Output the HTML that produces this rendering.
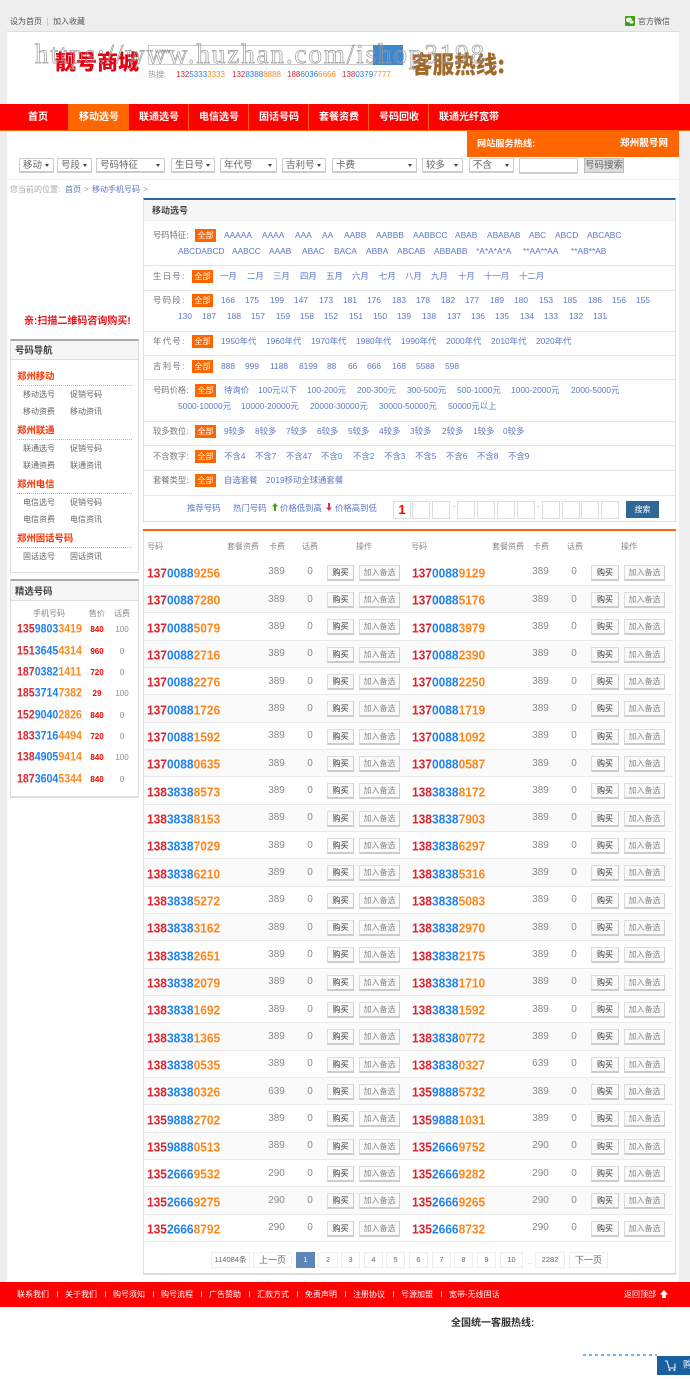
<!DOCTYPE html>
<html lang="zh"><head><meta charset="utf-8"><title>靓号商城</title>
<style>
*{margin:0;padding:0;box-sizing:border-box}
html,body{width:690px;height:1379px;overflow:hidden;background:#fff}
body{font-family:"Liberation Sans","Noto Sans CJK SC",sans-serif}
#p{position:relative;width:690px;height:1379px;overflow:hidden;filter:blur(.35px)}
.b{position:absolute}
.t,.t *{font-style:normal;text-decoration:none}
.t{position:absolute;white-space:nowrap;line-height:1;transform:translateY(-50%);font-size:8px;color:#666}
.fr{position:absolute;left:0;width:0;height:0}
.fr a{position:absolute;top:0;white-space:nowrap;line-height:1;transform:translateY(-50%);font-size:8.4px;color:#5b78c6}
.fr .lb{color:#777;font-size:8.3px}
.all{position:absolute;width:21px;height:13px;top:-6.5px;background:#f60;color:#fff;font-size:8px;line-height:13px;text-align:center}
.sel{position:absolute;top:158px;height:15px;border:1px solid #ccc;border-bottom:2px solid #ccc;background:#fff;font-size:9.5px;line-height:13px;color:#666;padding-left:3px;white-space:nowrap}
.sel:after{content:"";position:absolute;right:4px;top:5px;border:2px solid transparent;border-top:3px solid #444}
.nav{position:absolute;top:112px;font-size:10px;font-weight:700;color:#fff;line-height:12px;white-space:nowrap}
.sp{position:absolute;top:104px;width:1px;height:27px;background:#f60}
.sd{position:absolute;left:144px;width:531px;height:1px;background:#e6e6e6}
.i{position:absolute;font-size:8px;color:#666;line-height:1;white-space:nowrap;transform:translateY(-50%)}
.h{position:absolute;font-size:10.5px;font-weight:700;color:#f30;line-height:1;white-space:nowrap;transform:translateY(-50%) scaleX(.8);transform-origin:left}
.d{position:absolute;left:17px;width:115px;border-top:1px dotted #bbb}
.sn{position:absolute;left:17px;font-size:11.5px;font-weight:700;line-height:1;white-space:nowrap;transform:translateY(-50%) scaleX(.923);transform-origin:left}
.sn i{font-style:normal;color:#e0262e}.sn u{text-decoration:none;color:#1e82f0}.sn s{text-decoration:none;color:#ff8a1e}
.spr{position:absolute;left:85px;width:24px;text-align:center;font-size:8px;font-weight:700;color:#f00;line-height:1;transform:translateY(-50%)}
.sfe{position:absolute;left:110px;width:24px;text-align:center;font-size:8px;color:#888;line-height:1;transform:translateY(-50%)}
.th{position:absolute;top:547px;font-size:8px;color:#888;line-height:1;transform:translateY(-50%);white-space:nowrap}
#rows{position:absolute;left:144px;top:558.7px;width:529px}
.r{position:relative;height:27.33px;background:linear-gradient(#e9e9e9,#e9e9e9) 0 100%/100% 1px no-repeat}
.r.e{background:linear-gradient(#e9e9e9,#e9e9e9) 0 100%/100% 1px no-repeat,#fafafa}
.r b{position:absolute;top:14.3px;font-size:13px;font-weight:700;line-height:1;white-space:nowrap;transform:translateY(-50%) scaleX(.92);transform-origin:left}
.r b i{font-style:normal;color:#e0202a}.r b u{text-decoration:none;color:#1e82f5}.r b s{text-decoration:none;color:#ff861a}
.n1{left:3px}.n2{left:267.5px}
.r em{position:absolute;top:13.6px;font-style:normal;font-size:10px;color:#888;line-height:1;transform:translateY(-50%);text-align:center;width:24px}
.f1{left:120.5px}.z1{left:154px}.f2{left:384.5px}.z2{left:418px}
.r a{position:absolute;top:6px;height:16px;border:1px solid #ddd;border-bottom:2px solid #ccc;border-right-color:#ccc;font-size:8px;line-height:14px;text-align:center;background:#fafafa}
.y1{left:183px;width:27px;color:#333}.y2{left:447px;width:28px;color:#333}
.k1{left:215px;width:41px;color:#888}.k2{left:480px;width:41px;color:#888}
.pg{position:absolute;top:1252px;height:16px;border:1px solid #eee;font-size:7.5px;line-height:14px;text-align:center;color:#666;background:#fff}
.nb{position:absolute;top:501px;width:18px;height:18px;border:1px solid #ddd;background:#fff}
.ft{position:absolute;top:1295px;font-size:8px;color:#fff;line-height:1;transform:translateY(-50%);white-space:nowrap}
.fs{position:absolute;top:1291px;width:1px;height:6px;background:#fbb}
</style></head><body><div id="p">
<div class="b" style="left:0;top:0;width:690px;height:1282px;background:#eee"></div>
<div class="b" style="left:7px;top:31px;width:672px;height:1251px;background:#fff;border-top:1px solid #ddd"></div>
<span class="t" style="left:10px;top:22px;color:#555">设为首页</span>
<div class="b" style="left:47px;top:18px;width:1px;height:8px;background:#ccc"></div>
<span class="t" style="left:53px;top:22px;color:#555">加入收藏</span>
<div class="b" style="left:625px;top:16px;width:10px;height:10px;background:#3aa510;border-radius:1px"></div>
<svg class="b" style="left:625px;top:16px" width="10" height="10"><ellipse cx="4" cy="4" rx="3" ry="2.4" fill="#fff"/><ellipse cx="6.5" cy="6" rx="2.3" ry="1.9" fill="#fff" stroke="#3aa510" stroke-width=".5"/></svg>
<span class="t" style="left:638px;top:22px;color:#555">官方微信</span>

<div class="b" style="left:148px;top:45px;width:255px;height:20px;border:1px solid #ccc;background:#fff"></div>
<div class="b" style="left:373px;top:45px;width:30px;height:20px;background:#3d88cf"></div>
<span class="t" style="left:155px;top:52px;font-size:7px;color:#888">www</span>
<span class="t" style="left:55px;top:62px;font-size:21px;font-weight:900;color:#e60012;font-family:'Noto Sans CJK SC',sans-serif;letter-spacing:0">靓号商城</span>
<span class="t" style="left:411px;top:63px;font-size:24px;font-weight:900;color:#a06a2c;font-family:'Noto Sans CJK SC',sans-serif;transform:translateY(-50%) scaleX(.9);transform-origin:left">客服热线:</span>
<svg class="b" style="left:0;top:35px" width="520" height="40"><text x="35" y="28" textLength="449" lengthAdjust="spacing" font-family="Liberation Serif" font-size="27" fill="none" stroke="#999" stroke-width=".7">https://www.huzhan.com/ishop3198</text></svg>
<span class="t" style="left:148px;top:75px;color:#999">热搜:</span>
<span class="t" style="left:176px;top:75px;font-size:8px;color:#ff8a1e"><span style="color:#e0262e">132</span><span style="color:#1e82f0">5333</span>3333</span>
<span class="t" style="left:232px;top:75px;font-size:8px;color:#ff8a1e"><span style="color:#e0262e">132</span><span style="color:#1e82f0">8388</span>8888</span>
<span class="t" style="left:287px;top:75px;font-size:8px;color:#ff8a1e"><span style="color:#e0262e">188</span><span style="color:#1e82f0">6036</span>6666</span>
<span class="t" style="left:342px;top:75px;font-size:8px;color:#ff8a1e"><span style="color:#e0262e">138</span><span style="color:#1e82f0">0379</span>7777</span>

<div class="b" style="left:0;top:104px;width:690px;height:27px;background:#f00;border-bottom:1px solid #f60"></div>
<div class="b" style="left:68px;top:104px;width:60px;height:27px;background:#f60"></div>
<div class="sp" style="left:128px"></div><div class="sp" style="left:188px"></div><div class="sp" style="left:248px"></div><div class="sp" style="left:308px"></div><div class="sp" style="left:368px"></div><div class="sp" style="left:428px"></div>
<span class="nav" style="left:28px">首页</span><span class="nav" style="left:79px">移动选号</span><span class="nav" style="left:139px">联通选号</span><span class="nav" style="left:199px">电信选号</span><span class="nav" style="left:259px">固话号码</span><span class="nav" style="left:319px">套餐资费</span><span class="nav" style="left:379px">号码回收</span><span class="nav" style="left:439px">联通光纤宽带</span>

<div class="b" style="left:467px;top:131px;width:212px;height:26px;background:#f60"></div>
<span class="t" style="left:477px;top:144px;font-size:9.2px;font-weight:700;color:#fff">网站服务热线:</span>
<span class="t" style="left:620px;top:144px;font-size:9.6px;font-weight:700;color:#fff">郑州靓号网</span>

<div class="sel" style="left:19px;width:35px">移动</div><div class="sel" style="left:57px;width:35px">号段</div><div class="sel" style="left:96px;width:69px">号码特征</div><div class="sel" style="left:171px;width:44px">生日号</div><div class="sel" style="left:220px;width:57px">年代号</div><div class="sel" style="left:282px;width:44px">吉利号</div><div class="sel" style="left:332px;width:85px">卡费</div><div class="sel" style="left:422px;width:41px">较多</div><div class="sel" style="left:469px;width:45px">不含</div>
<div class="b" style="left:519px;top:158px;width:59px;height:16px;border:1px solid #ccc;border-bottom:2px solid #ccc;background:#fff"></div>
<div class="b" style="left:584px;top:158px;width:40px;height:15px;border:1px solid #bbb;background:#ddd;color:#666;font-size:9.5px;line-height:13px;text-align:center;white-space:nowrap">号码搜索</div>
<div class="b" style="left:7px;top:179px;width:672px;height:1px;background:#f0f0f0"></div>
<span class="t" style="left:10px;top:190px;color:#aaa">您当前的位置:</span>
<span class="t" style="left:65px;top:190px;color:#5b78c6">首页</span><span class="t" style="left:84px;top:190px;color:#999">&gt;</span>
<span class="t" style="left:92px;top:190px;color:#5b78c6">移动手机号码</span><span class="t" style="left:143px;top:190px;color:#999">&gt;</span>

<!-- filter panel -->
<div class="b" style="left:143px;top:198px;width:533px;height:324px;border:1px solid #e0e0e0;border-top:2px solid #2f6796;background:#fff"></div>
<div class="b" style="left:144px;top:200px;width:531px;height:21px;background:#f7f7f7;border-bottom:1px solid #eee"></div>
<span class="t" style="left:152px;top:211px;font-size:9px;font-weight:700;color:#444">移动选号</span>
<div class="sd" style="top:265px"></div><div class="sd" style="top:290px"></div><div class="sd" style="top:331px"></div><div class="sd" style="top:355px"></div><div class="sd" style="top:379px"></div><div class="sd" style="top:421px"></div><div class="sd" style="top:445px"></div><div class="sd" style="top:470px"></div><div class="sd" style="top:495px"></div>

<div class="fr" style="top:235px"><a class="lb" style="left:153px">号码特征:</a><span class="all" style="left:195px">全部</span><a style="left:224px">AAAAA</a><a style="left:262px">AAAA</a><a style="left:295px">AAA</a><a style="left:322px">AA</a><a style="left:344px">AABB</a><a style="left:376px">AABBB</a><a style="left:413px">AABBCC</a><a style="left:455px">ABAB</a><a style="left:487px">ABABAB</a><a style="left:529px">ABC</a><a style="left:555px">ABCD</a><a style="left:587px">ABCABC</a></div>
<div class="fr" style="top:251px"><a style="left:178px">ABCDABCD</a><a style="left:232px">AABCC</a><a style="left:269px">AAAB</a><a style="left:302px">ABAC</a><a style="left:334px">BACA</a><a style="left:366px">ABBA</a><a style="left:397px">ABCAB</a><a style="left:434px">ABBABB</a><a style="left:476px">*A*A*A*A</a><a style="left:523px">**AA**AA</a><a style="left:571px">**AB**AB</a></div>
<div class="fr" style="top:276px"><a class="lb" style="left:153px;letter-spacing:1.4px">生日号:</a><span class="all" style="left:192px">全部</span><a style="left:220px">一月</a><a style="left:247px">二月</a><a style="left:273px">三月</a><a style="left:300px">四月</a><a style="left:326px">五月</a><a style="left:352px">六月</a><a style="left:379px">七月</a><a style="left:405px">八月</a><a style="left:431px">九月</a><a style="left:458px">十月</a><a style="left:484px">十一月</a><a style="left:519px">十二月</a></div>
<div class="fr" style="top:300px"><a class="lb" style="left:153px;letter-spacing:1.4px">号码段:</a><span class="all" style="left:192px">全部</span><a style="left:221px">166</a><a style="left:245px">175</a><a style="left:270px">199</a><a style="left:294px">147</a><a style="left:319px">173</a><a style="left:343px">181</a><a style="left:367px">176</a><a style="left:392px">183</a><a style="left:416px">178</a><a style="left:441px">182</a><a style="left:465px">177</a><a style="left:490px">189</a><a style="left:514px">180</a><a style="left:539px">153</a><a style="left:563px">185</a><a style="left:588px">186</a><a style="left:612px">156</a><a style="left:636px">155</a></div>
<div class="fr" style="top:316px"><a style="left:178px">130</a><a style="left:202px">187</a><a style="left:227px">188</a><a style="left:251px">157</a><a style="left:276px">159</a><a style="left:300px">158</a><a style="left:324px">152</a><a style="left:349px">151</a><a style="left:373px">150</a><a style="left:397px">139</a><a style="left:422px">138</a><a style="left:447px">137</a><a style="left:471px">136</a><a style="left:495px">135</a><a style="left:520px">134</a><a style="left:544px">133</a><a style="left:569px">132</a><a style="left:593px">131</a></div>
<div class="fr" style="top:341px"><a class="lb" style="left:153px;letter-spacing:1.4px">年代号:</a><span class="all" style="left:192px">全部</span><a style="left:221px">1950年代</a><a style="left:266px">1960年代</a><a style="left:311px">1970年代</a><a style="left:356px">1980年代</a><a style="left:401px">1990年代</a><a style="left:446px">2000年代</a><a style="left:491px">2010年代</a><a style="left:536px">2020年代</a></div>
<div class="fr" style="top:366px"><a class="lb" style="left:153px;letter-spacing:1.4px">吉利号:</a><span class="all" style="left:192px">全部</span><a style="left:221px">888</a><a style="left:245px">999</a><a style="left:270px">1188</a><a style="left:299px">8199</a><a style="left:327px">88</a><a style="left:348px">66</a><a style="left:367px">666</a><a style="left:392px">168</a><a style="left:416px">5588</a><a style="left:445px">598</a></div>
<div class="fr" style="top:390px"><a class="lb" style="left:153px">号码价格:</a><span class="all" style="left:195px">全部</span><a style="left:224px">待询价</a><a style="left:258px">100元以下</a><a style="left:307px">100-200元</a><a style="left:357px">200-300元</a><a style="left:407px">300-500元</a><a style="left:457px">500-1000元</a><a style="left:511px">1000-2000元</a><a style="left:571px">2000-5000元</a></div>
<div class="fr" style="top:406px"><a style="left:178px">5000-10000元</a><a style="left:241px">10000-20000元</a><a style="left:310px">20000-30000元</a><a style="left:379px">30000-50000元</a><a style="left:448px">50000元以上</a></div>
<div class="fr" style="top:431px"><a class="lb" style="left:153px">较多数位:</a><span class="all" style="left:195px">全部</span><a style="left:224px">9较多</a><a style="left:255px">8较多</a><a style="left:286px">7较多</a><a style="left:317px">6较多</a><a style="left:348px">5较多</a><a style="left:379px">4较多</a><a style="left:410px">3较多</a><a style="left:442px">2较多</a><a style="left:473px">1较多</a><a style="left:503px">0较多</a></div>
<div class="fr" style="top:456px"><a class="lb" style="left:153px">不含数字:</a><span class="all" style="left:195px">全部</span><a style="left:224px">不含4</a><a style="left:255px">不含7</a><a style="left:286px">不含47</a><a style="left:321px">不含0</a><a style="left:353px">不含2</a><a style="left:384px">不含3</a><a style="left:415px">不含5</a><a style="left:446px">不含6</a><a style="left:477px">不含8</a><a style="left:508px">不含9</a></div>
<div class="fr" style="top:480px"><a class="lb" style="left:153px">套餐类型:</a><span class="all" style="left:195px">全部</span><a style="left:224px">自选套餐</a><a style="left:266px">2019移动全球通套餐</a></div>
<div class="fr" style="top:508px"><a style="left:187px">推荐号码</a><a style="left:233px">热门号码</a><a style="left:280px">价格低到高</a><a style="left:335px">价格高到低</a></div>
<svg class="b" style="left:271px;top:502px" width="8" height="10"><path d="M4 1L7 4.5H5V9H3V4.5H1Z" fill="#3aa510"/></svg>
<svg class="b" style="left:325px;top:502px" width="8" height="10"><path d="M4 9L7 5.5H5V1H3V5.5H1Z" fill="#f0246a"/></svg>
<div class="nb" style="left:393px;color:#f00;font:700 13px/16px 'Liberation Sans',sans-serif;text-align:center">1</div><div class="nb" style="left:412px"></div><div class="nb" style="left:432px"></div>
<span class="t" style="left:453px;top:507px;color:#999">-</span>
<div class="nb" style="left:457px"></div><div class="nb" style="left:477px"></div><div class="nb" style="left:497px"></div><div class="nb" style="left:517px"></div>
<span class="t" style="left:537px;top:507px;color:#999">-</span>
<div class="nb" style="left:542px"></div><div class="nb" style="left:562px"></div><div class="nb" style="left:581px"></div><div class="nb" style="left:601px"></div>
<div class="b" style="left:626px;top:501px;width:33px;height:17px;background:#2f6796;color:#fff;font-size:8px;line-height:17px;text-align:center">搜索</div>

<!-- sidebar -->
<span class="t" style="left:24px;top:322px;font-size:10px;font-weight:700;color:#e8141c">亲:扫描二维码咨询购买!</span>
<div class="b" style="left:10px;top:339px;width:129px;height:234px;border:1px solid #ddd;border-top:2px solid #aaa;background:#fff"></div>
<div class="b" style="left:11px;top:341px;width:127px;height:19px;background:#f6f6f6;border-bottom:1px solid #ddd"></div>
<span class="t" style="left:15px;top:350px;font-size:9.4px;font-weight:700;color:#444">号码导航</span>
<span class="h" style="left:17px;top:376px;font-size:9.4px;transform:translateY(-50%)">郑州移动</span><div class="d" style="top:385px"></div>
<span class="i" style="left:23px;top:395px">移动选号</span><span class="i" style="left:70px;top:395px">促销号码</span><span class="i" style="left:23px;top:412px">移动资费</span><span class="i" style="left:70px;top:412px">移动资讯</span>
<span class="h" style="left:17px;top:430px;font-size:9.4px;transform:translateY(-50%)">郑州联通</span><div class="d" style="top:439px"></div>
<span class="i" style="left:23px;top:449px">联通选号</span><span class="i" style="left:70px;top:449px">促销号码</span><span class="i" style="left:23px;top:466px">联通资费</span><span class="i" style="left:70px;top:466px">联通资讯</span>
<span class="h" style="left:17px;top:484px;font-size:9.4px;transform:translateY(-50%)">郑州电信</span><div class="d" style="top:493px"></div>
<span class="i" style="left:23px;top:503px">电信选号</span><span class="i" style="left:70px;top:503px">促销号码</span><span class="i" style="left:23px;top:520px">电信资费</span><span class="i" style="left:70px;top:520px">电信资讯</span>
<span class="h" style="left:17px;top:538px;font-size:9.4px;transform:translateY(-50%)">郑州固话号码</span><div class="d" style="top:547px"></div>
<span class="i" style="left:23px;top:557px">固话选号</span><span class="i" style="left:70px;top:557px">固话资讯</span>

<div class="b" style="left:10px;top:579px;width:129px;height:219px;border:1px solid #ddd;border-bottom:2px solid #ddd;border-top:2px solid #aaa;background:#fff"></div>
<div class="b" style="left:11px;top:581px;width:127px;height:20px;background:#f6f6f6;border-bottom:1px solid #ddd"></div>
<span class="t" style="left:15px;top:591px;font-size:9.4px;font-weight:700;color:#444">精选号码</span>
<span class="t" style="left:33px;top:614px;color:#888">手机号码</span><span class="t" style="left:89px;top:614px;color:#888">售价</span><span class="t" style="left:114px;top:614px;color:#888">话费</span>
<span class="sn" style="top:630px"><i>135</i><u>9803</u><s>3419</s></span><span class="spr" style="top:630px">840</span><span class="sfe" style="top:630px">100</span>
<span class="sn" style="top:652px"><i>151</i><u>3645</u><s>4314</s></span><span class="spr" style="top:652px">960</span><span class="sfe" style="top:652px">0</span>
<span class="sn" style="top:673px"><i>187</i><u>0382</u><s>1411</s></span><span class="spr" style="top:673px">720</span><span class="sfe" style="top:673px">0</span>
<span class="sn" style="top:694px"><i>185</i><u>3714</u><s>7382</s></span><span class="spr" style="top:694px">29</span><span class="sfe" style="top:694px">100</span>
<span class="sn" style="top:716px"><i>152</i><u>9040</u><s>2826</s></span><span class="spr" style="top:716px">840</span><span class="sfe" style="top:716px">0</span>
<span class="sn" style="top:737px"><i>183</i><u>3716</u><s>4494</s></span><span class="spr" style="top:737px">720</span><span class="sfe" style="top:737px">0</span>
<span class="sn" style="top:758px"><i>138</i><u>4905</u><s>9414</s></span><span class="spr" style="top:758px">840</span><span class="sfe" style="top:758px">100</span>
<span class="sn" style="top:780px"><i>187</i><u>3604</u><s>5344</s></span><span class="spr" style="top:780px">840</span><span class="sfe" style="top:780px">0</span>

<!-- table -->
<div class="b" style="left:143px;top:529px;width:533px;height:746px;border:1px solid #e0e0e0;border-bottom:2px solid #ddd;background:#fff"></div>
<div class="b" style="left:143px;top:529px;width:533px;height:1.5px;background:#f60"></div>
<span class="th" style="left:147px">号码</span><span class="th" style="left:227px">套餐资费</span><span class="th" style="left:269px">卡费</span><span class="th" style="left:302px">话费</span><span class="th" style="left:356px">操作</span><span class="th" style="left:411px">号码</span><span class="th" style="left:492px">套餐资费</span><span class="th" style="left:533px">卡费</span><span class="th" style="left:567px">话费</span><span class="th" style="left:621px">操作</span>
<div id="rows">
<div class="r"><b class="n1"><i>137</i><u>0088</u><s>9256</s></b><em class="f1">389</em><em class="z1">0</em><a class="y1">购买</a><a class="k1">加入备选</a><b class="n2"><i>137</i><u>0088</u><s>9129</s></b><em class="f2">389</em><em class="z2">0</em><a class="y2">购买</a><a class="k2">加入备选</a></div>
<div class="r e"><b class="n1"><i>137</i><u>0088</u><s>7280</s></b><em class="f1">389</em><em class="z1">0</em><a class="y1">购买</a><a class="k1">加入备选</a><b class="n2"><i>137</i><u>0088</u><s>5176</s></b><em class="f2">389</em><em class="z2">0</em><a class="y2">购买</a><a class="k2">加入备选</a></div>
<div class="r"><b class="n1"><i>137</i><u>0088</u><s>5079</s></b><em class="f1">389</em><em class="z1">0</em><a class="y1">购买</a><a class="k1">加入备选</a><b class="n2"><i>137</i><u>0088</u><s>3979</s></b><em class="f2">389</em><em class="z2">0</em><a class="y2">购买</a><a class="k2">加入备选</a></div>
<div class="r e"><b class="n1"><i>137</i><u>0088</u><s>2716</s></b><em class="f1">389</em><em class="z1">0</em><a class="y1">购买</a><a class="k1">加入备选</a><b class="n2"><i>137</i><u>0088</u><s>2390</s></b><em class="f2">389</em><em class="z2">0</em><a class="y2">购买</a><a class="k2">加入备选</a></div>
<div class="r"><b class="n1"><i>137</i><u>0088</u><s>2276</s></b><em class="f1">389</em><em class="z1">0</em><a class="y1">购买</a><a class="k1">加入备选</a><b class="n2"><i>137</i><u>0088</u><s>2250</s></b><em class="f2">389</em><em class="z2">0</em><a class="y2">购买</a><a class="k2">加入备选</a></div>
<div class="r e"><b class="n1"><i>137</i><u>0088</u><s>1726</s></b><em class="f1">389</em><em class="z1">0</em><a class="y1">购买</a><a class="k1">加入备选</a><b class="n2"><i>137</i><u>0088</u><s>1719</s></b><em class="f2">389</em><em class="z2">0</em><a class="y2">购买</a><a class="k2">加入备选</a></div>
<div class="r"><b class="n1"><i>137</i><u>0088</u><s>1592</s></b><em class="f1">389</em><em class="z1">0</em><a class="y1">购买</a><a class="k1">加入备选</a><b class="n2"><i>137</i><u>0088</u><s>1092</s></b><em class="f2">389</em><em class="z2">0</em><a class="y2">购买</a><a class="k2">加入备选</a></div>
<div class="r e"><b class="n1"><i>137</i><u>0088</u><s>0635</s></b><em class="f1">389</em><em class="z1">0</em><a class="y1">购买</a><a class="k1">加入备选</a><b class="n2"><i>137</i><u>0088</u><s>0587</s></b><em class="f2">389</em><em class="z2">0</em><a class="y2">购买</a><a class="k2">加入备选</a></div>
<div class="r"><b class="n1"><i>138</i><u>3838</u><s>8573</s></b><em class="f1">389</em><em class="z1">0</em><a class="y1">购买</a><a class="k1">加入备选</a><b class="n2"><i>138</i><u>3838</u><s>8172</s></b><em class="f2">389</em><em class="z2">0</em><a class="y2">购买</a><a class="k2">加入备选</a></div>
<div class="r e"><b class="n1"><i>138</i><u>3838</u><s>8153</s></b><em class="f1">389</em><em class="z1">0</em><a class="y1">购买</a><a class="k1">加入备选</a><b class="n2"><i>138</i><u>3838</u><s>7903</s></b><em class="f2">389</em><em class="z2">0</em><a class="y2">购买</a><a class="k2">加入备选</a></div>
<div class="r"><b class="n1"><i>138</i><u>3838</u><s>7029</s></b><em class="f1">389</em><em class="z1">0</em><a class="y1">购买</a><a class="k1">加入备选</a><b class="n2"><i>138</i><u>3838</u><s>6297</s></b><em class="f2">389</em><em class="z2">0</em><a class="y2">购买</a><a class="k2">加入备选</a></div>
<div class="r e"><b class="n1"><i>138</i><u>3838</u><s>6210</s></b><em class="f1">389</em><em class="z1">0</em><a class="y1">购买</a><a class="k1">加入备选</a><b class="n2"><i>138</i><u>3838</u><s>5316</s></b><em class="f2">389</em><em class="z2">0</em><a class="y2">购买</a><a class="k2">加入备选</a></div>
<div class="r"><b class="n1"><i>138</i><u>3838</u><s>5272</s></b><em class="f1">389</em><em class="z1">0</em><a class="y1">购买</a><a class="k1">加入备选</a><b class="n2"><i>138</i><u>3838</u><s>5083</s></b><em class="f2">389</em><em class="z2">0</em><a class="y2">购买</a><a class="k2">加入备选</a></div>
<div class="r e"><b class="n1"><i>138</i><u>3838</u><s>3162</s></b><em class="f1">389</em><em class="z1">0</em><a class="y1">购买</a><a class="k1">加入备选</a><b class="n2"><i>138</i><u>3838</u><s>2970</s></b><em class="f2">389</em><em class="z2">0</em><a class="y2">购买</a><a class="k2">加入备选</a></div>
<div class="r"><b class="n1"><i>138</i><u>3838</u><s>2651</s></b><em class="f1">389</em><em class="z1">0</em><a class="y1">购买</a><a class="k1">加入备选</a><b class="n2"><i>138</i><u>3838</u><s>2175</s></b><em class="f2">389</em><em class="z2">0</em><a class="y2">购买</a><a class="k2">加入备选</a></div>
<div class="r e"><b class="n1"><i>138</i><u>3838</u><s>2079</s></b><em class="f1">389</em><em class="z1">0</em><a class="y1">购买</a><a class="k1">加入备选</a><b class="n2"><i>138</i><u>3838</u><s>1710</s></b><em class="f2">389</em><em class="z2">0</em><a class="y2">购买</a><a class="k2">加入备选</a></div>
<div class="r"><b class="n1"><i>138</i><u>3838</u><s>1692</s></b><em class="f1">389</em><em class="z1">0</em><a class="y1">购买</a><a class="k1">加入备选</a><b class="n2"><i>138</i><u>3838</u><s>1592</s></b><em class="f2">389</em><em class="z2">0</em><a class="y2">购买</a><a class="k2">加入备选</a></div>
<div class="r e"><b class="n1"><i>138</i><u>3838</u><s>1365</s></b><em class="f1">389</em><em class="z1">0</em><a class="y1">购买</a><a class="k1">加入备选</a><b class="n2"><i>138</i><u>3838</u><s>0772</s></b><em class="f2">389</em><em class="z2">0</em><a class="y2">购买</a><a class="k2">加入备选</a></div>
<div class="r"><b class="n1"><i>138</i><u>3838</u><s>0535</s></b><em class="f1">389</em><em class="z1">0</em><a class="y1">购买</a><a class="k1">加入备选</a><b class="n2"><i>138</i><u>3838</u><s>0327</s></b><em class="f2">639</em><em class="z2">0</em><a class="y2">购买</a><a class="k2">加入备选</a></div>
<div class="r e"><b class="n1"><i>138</i><u>3838</u><s>0326</s></b><em class="f1">639</em><em class="z1">0</em><a class="y1">购买</a><a class="k1">加入备选</a><b class="n2"><i>135</i><u>9888</u><s>5732</s></b><em class="f2">389</em><em class="z2">0</em><a class="y2">购买</a><a class="k2">加入备选</a></div>
<div class="r"><b class="n1"><i>135</i><u>9888</u><s>2702</s></b><em class="f1">389</em><em class="z1">0</em><a class="y1">购买</a><a class="k1">加入备选</a><b class="n2"><i>135</i><u>9888</u><s>1031</s></b><em class="f2">389</em><em class="z2">0</em><a class="y2">购买</a><a class="k2">加入备选</a></div>
<div class="r e"><b class="n1"><i>135</i><u>9888</u><s>0513</s></b><em class="f1">389</em><em class="z1">0</em><a class="y1">购买</a><a class="k1">加入备选</a><b class="n2"><i>135</i><u>2666</u><s>9752</s></b><em class="f2">290</em><em class="z2">0</em><a class="y2">购买</a><a class="k2">加入备选</a></div>
<div class="r"><b class="n1"><i>135</i><u>2666</u><s>9532</s></b><em class="f1">290</em><em class="z1">0</em><a class="y1">购买</a><a class="k1">加入备选</a><b class="n2"><i>135</i><u>2666</u><s>9282</s></b><em class="f2">290</em><em class="z2">0</em><a class="y2">购买</a><a class="k2">加入备选</a></div>
<div class="r e"><b class="n1"><i>135</i><u>2666</u><s>9275</s></b><em class="f1">290</em><em class="z1">0</em><a class="y1">购买</a><a class="k1">加入备选</a><b class="n2"><i>135</i><u>2666</u><s>9265</s></b><em class="f2">290</em><em class="z2">0</em><a class="y2">购买</a><a class="k2">加入备选</a></div>
<div class="r"><b class="n1"><i>135</i><u>2666</u><s>8792</s></b><em class="f1">290</em><em class="z1">0</em><a class="y1">购买</a><a class="k1">加入备选</a><b class="n2"><i>135</i><u>2666</u><s>8732</s></b><em class="f2">290</em><em class="z2">0</em><a class="y2">购买</a><a class="k2">加入备选</a></div>
</div>
<div class="pg" style="left:211px;width:39px">114084条</div><div class="pg" style="left:253px;width:39px;font-size:9px">上一页</div><div class="pg" style="left:296px;width:19px;background:#5b86b5;color:#fff;border-color:#5b86b5">1</div><div class="pg" style="left:318px;width:20px">2</div><div class="pg" style="left:341px;width:19px">3</div><div class="pg" style="left:364px;width:19px">4</div><div class="pg" style="left:386px;width:19px">5</div><div class="pg" style="left:409px;width:19px">6</div><div class="pg" style="left:432px;width:19px">7</div><div class="pg" style="left:454px;width:19px">8</div><div class="pg" style="left:477px;width:19px">9</div><div class="pg" style="left:500px;width:23px">10</div>
<span class="t" style="left:527px;top:1262px;color:#bbb">..</span>
<div class="pg" style="left:535px;width:30px">2282</div><div class="pg" style="left:569px;width:39px;font-size:9px">下一页</div>

<!-- footer -->
<div class="b" style="left:0;top:1282px;width:690px;height:25px;background:#f00"></div>
<div class="b" style="left:0;top:1307px;width:690px;height:72px;background:#fff"></div>
<span class="ft" style="left:17px">联系我们</span><span class="ft" style="left:65px">关于我们</span><span class="ft" style="left:113px">购号须知</span><span class="ft" style="left:161px">购号流程</span><span class="ft" style="left:209px">广告赞助</span><span class="ft" style="left:257px">汇款方式</span><span class="ft" style="left:305px">免责声明</span><span class="ft" style="left:353px">注册协议</span><span class="ft" style="left:401px">号源加盟</span><span class="ft" style="left:449px">宽带-无线固话</span><span class="ft" style="left:624px">返回顶部</span>
<div class="fs" style="left:57px"></div><div class="fs" style="left:105px"></div><div class="fs" style="left:153px"></div><div class="fs" style="left:201px"></div><div class="fs" style="left:249px"></div><div class="fs" style="left:297px"></div><div class="fs" style="left:345px"></div><div class="fs" style="left:393px"></div><div class="fs" style="left:441px"></div>
<svg class="b" style="left:659px;top:1289px" width="10" height="10"><path d="M5 1L9 5.5H6.8V9H3.2V5.5H1Z" fill="#fff"/></svg>
<span class="t" style="left:451px;top:1324px;font-size:10px;font-weight:700;color:#333">全国统一客服热线:</span>
<div class="b" style="left:583px;top:1354px;width:74px;height:1.5px;background:repeating-linear-gradient(90deg,#7ab0e8 0 3px,#fff 3px 6px)"></div>
<div class="b" style="left:657px;top:1356px;width:33px;height:19px;background:#1a5f9f"></div>
<svg class="b" style="left:664px;top:1359px" width="14" height="13"><path d="M1 2H3L5 9H11V4.5" fill="none" stroke="#fff" stroke-width="1"/><circle cx="5.5" cy="11" r="1" fill="#fff"/><circle cx="10.5" cy="11" r="1" fill="#fff"/></svg>
<span class="t" style="left:683px;top:1365px;font-size:9px;color:#fff">购</span>
</div></body></html>
